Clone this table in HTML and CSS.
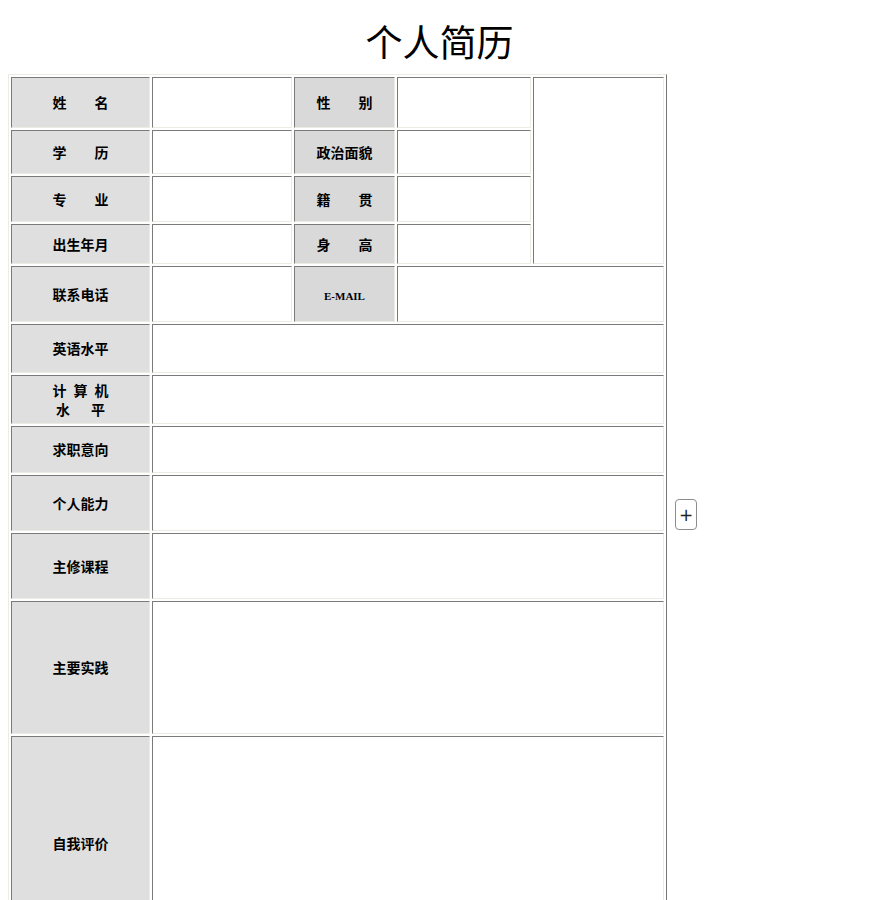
FILE: index.html
```html
<!DOCTYPE html>
<html lang="zh-CN">
<head>
<meta charset="utf-8">
<title>个人简历</title>
<link rel="stylesheet" href="styles.css">
</head>
<body>
<div class="side-tab" aria-hidden="true"></div>
<div class="title">个人简历</div>
<table class="resume">
  <tr class="r1">
    <td class="lab c1">姓　　名</td>
    <td class="val c2"></td>
    <td class="lab2 c3">性　　别</td>
    <td class="val c4"></td>
    <td class="val c5" rowspan="4"></td>
  </tr>
  <tr class="r2">
    <td class="lab">学　　历</td>
    <td class="val"></td>
    <td class="lab2">政治面貌</td>
    <td class="val"></td>
  </tr>
  <tr class="r3">
    <td class="lab">专　　业</td>
    <td class="val"></td>
    <td class="lab2">籍　　贯</td>
    <td class="val"></td>
  </tr>
  <tr class="r4">
    <td class="lab">出生年月</td>
    <td class="val"></td>
    <td class="lab2">身　　高</td>
    <td class="val"></td>
  </tr>
  <tr class="r5">
    <td class="lab">联系电话</td>
    <td class="val"></td>
    <td class="lab2 mail">E-MAIL</td>
    <td class="val" colspan="2"></td>
  </tr>
  <tr class="r6">
    <td class="lab">英语水平</td>
    <td class="val" colspan="4"></td>
  </tr>
  <tr class="r7">
    <td class="lab two">计&#8194;算&#8194;机<br>水&#8194;&#8194;&#8194;平</td>
    <td class="val" colspan="4"></td>
  </tr>
  <tr class="r8">
    <td class="lab">求职意向</td>
    <td class="val" colspan="4"></td>
  </tr>
  <tr class="r9">
    <td class="lab">个人能力</td>
    <td class="val" colspan="4"></td>
  </tr>
  <tr class="r10">
    <td class="lab">主修课程</td>
    <td class="val" colspan="4"></td>
  </tr>
  <tr class="r11">
    <td class="lab">主要实践</td>
    <td class="val" colspan="4"></td>
  </tr>
  <tr class="r12">
    <td class="lab">自我评价</td>
    <td class="val" colspan="4"></td>
  </tr>
</table>
<button class="add-btn" type="button">+</button>
</body>
</html>
```

FILE: styles.css
```css
html, body {
  background: #ffffff;
}
body {
  margin: 8px;
  font-family: "Noto Sans CJK SC", "Noto Sans", sans-serif;
  color: #000;
  position: relative;
}
.title {
  height: 66px;
  line-height: 66px;
  text-align: center;
  font-size: 37px;
  font-family: "Noto Sans CJK SC", serif;
  font-weight: 400;
}
.resume {
  border-collapse: separate;
  border-spacing: 2px;
  border: 1px solid;
  border-color: #ecebe4 #777777 #777777 #ecebe4;
  background: #fff;
}
.resume td {
  padding: 0;
  border: 1px solid;
  border-color: #7a7a7a #ecebe4 #ecebe4 #7a7a7a;
  text-align: center;
  vertical-align: middle;
  font-size: 14px;
  font-weight: 700;
  line-height: 17px;
}
.resume td.two {
  line-height: 19px;
}
.lab { background: #dfdfdf; }
.lab2 { background: #d9d9d9; }
.val { background: #ffffff; }
.c1 { width: 137px; }
.c2 { width: 138px; }
.c3 { width: 99px; }
.c4 { width: 132px; }
.c5 { width: 129px; }
.r1 td { height: 49px; }
.r2 td { height: 42px; }
.r3 td { height: 44px; }
.r4 td { height: 38px; }
.r5 td { height: 54px; }
.r6 td { height: 47px; }
.r7 td { height: 47px; }
.r8 td { height: 45px; }
.r9 td { height: 54px; }
.r10 td { height: 64px; }
.r11 td { height: 131px; }
.r12 td { height: 212px; }
.resume td.c5 { height: auto; }
.resume .r5 td.mail {
  font-family: "Liberation Serif", serif;
  font-size: 11px;
  line-height: 14px;
  padding-top: 4px;
  height: 50px;
}
.side-tab {
  position: absolute;
  left: -18px;
  top: 35px;
  width: 14px;
  height: 23px;
  border: 1px solid #8a8a8a;
  border-radius: 4px;
  background: #fff;
}
.add-btn {
  position: absolute;
  left: 667px;
  top: 491px;
  width: 22px;
  height: 31px;
  border: 1px solid #8c8c8c;
  border-radius: 4px;
  background: #fff;
  padding: 0;
  font-family: "DejaVu Sans", sans-serif;
  font-weight: 400;
  font-size: 17px;
  line-height: 26px;
  color: #222222;
}
```
